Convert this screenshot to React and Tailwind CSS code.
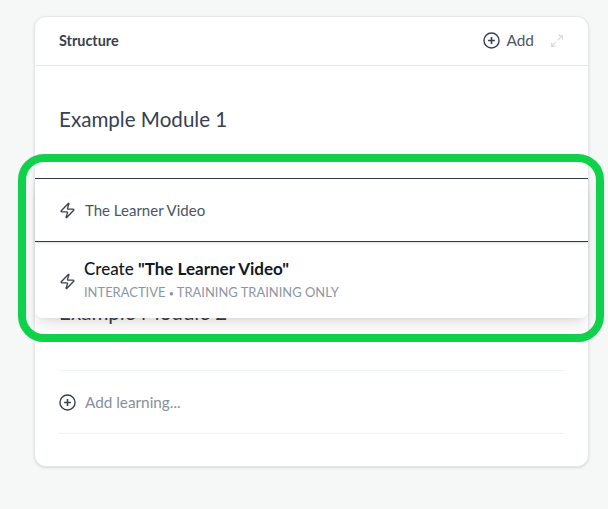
import { Zap, Maximize2 } from "lucide-react";

const PlusCircle = ({ className }) => (
  <svg viewBox="0 0 18 18" fill="none" stroke="currentColor" className={className}>
    <circle cx="9" cy="9" r="8" strokeWidth="1.5" />
    <path d="M9 5.4v7.2M5.4 9h7.2" strokeWidth="1.7" />
  </svg>
);

const App = () => {
  return (
    <div className="relative h-[509px] w-[608px] overflow-hidden bg-[#f6f8f8] pt-4 pl-[34px] font-['Lato',sans-serif] text-[#374151]">
      <div className="h-[451px] w-[555px] rounded-xl border border-[#e5e8ea] bg-white shadow-sm">
        <div className="flex h-[49px] items-center justify-between border-b border-[#e5e8ea] pr-6 pl-6">
          <span className="-mt-px text-[14.4px] font-bold text-[#374151]">Structure</span>
          <div className="flex items-center">
            <PlusCircle className="h-[17px] w-[17px]" />
            <span className="ml-[7px] text-[15.4px] text-[#4b5563]">Add</span>
            <Maximize2 className="ml-4 h-[14px] w-[14px] text-[#cbd5da]" strokeWidth={1.75} />
          </div>
        </div>
        <div className="px-6">
          <h2 className="pt-[39px] text-[20.6px] leading-7 font-normal">Example Module 1</h2>
          <h2 className="pt-[165px] text-[20.6px] leading-7 font-normal">Example Module 2</h2>
          <div className="mt-[44px] flex h-[64px] items-center border-y border-[#edf2f5]">
            <PlusCircle className="h-[17px] w-[17px]" />
            <span className="ml-[9px] text-[15.3px] text-[#84909c]">Add learning...</span>
          </div>
        </div>
      </div>

      <div className="absolute top-[178px] left-[35px] w-[553px] rounded-b-lg bg-white shadow-lg">
        <div className="flex h-[64px] items-center border-y border-[#2f3b47] pl-6 shadow-sm">
          <Zap className="h-[17px] w-[17px]" strokeWidth={1.9} />
          <span className="ml-[9px] text-[15px] text-[#4b5563]">The Learner Video</span>
        </div>
        <div className="flex h-[76px] items-center pl-6">
          <Zap className="mt-0.5 h-[17px] w-[17px]" strokeWidth={1.9} />
          <div className="ml-2">
            <div className="text-[17px] leading-5 font-medium text-[#111827]">
              Create <span className="font-bold">"The Learner Video"</span>
            </div>
            <div className="mt-[5px] text-[12.95px] leading-4 text-[#8b96a3]">
              INTERACTIVE <span className="text-[9px]">•</span> TRAINING TRAINING ONLY
            </div>
          </div>
        </div>
      </div>

      <div className="absolute top-[154px] left-[18px] h-[188px] w-[586px] rounded-[26px] border-8 border-[#10d14a]" />
    </div>
  );
};

export default App;
